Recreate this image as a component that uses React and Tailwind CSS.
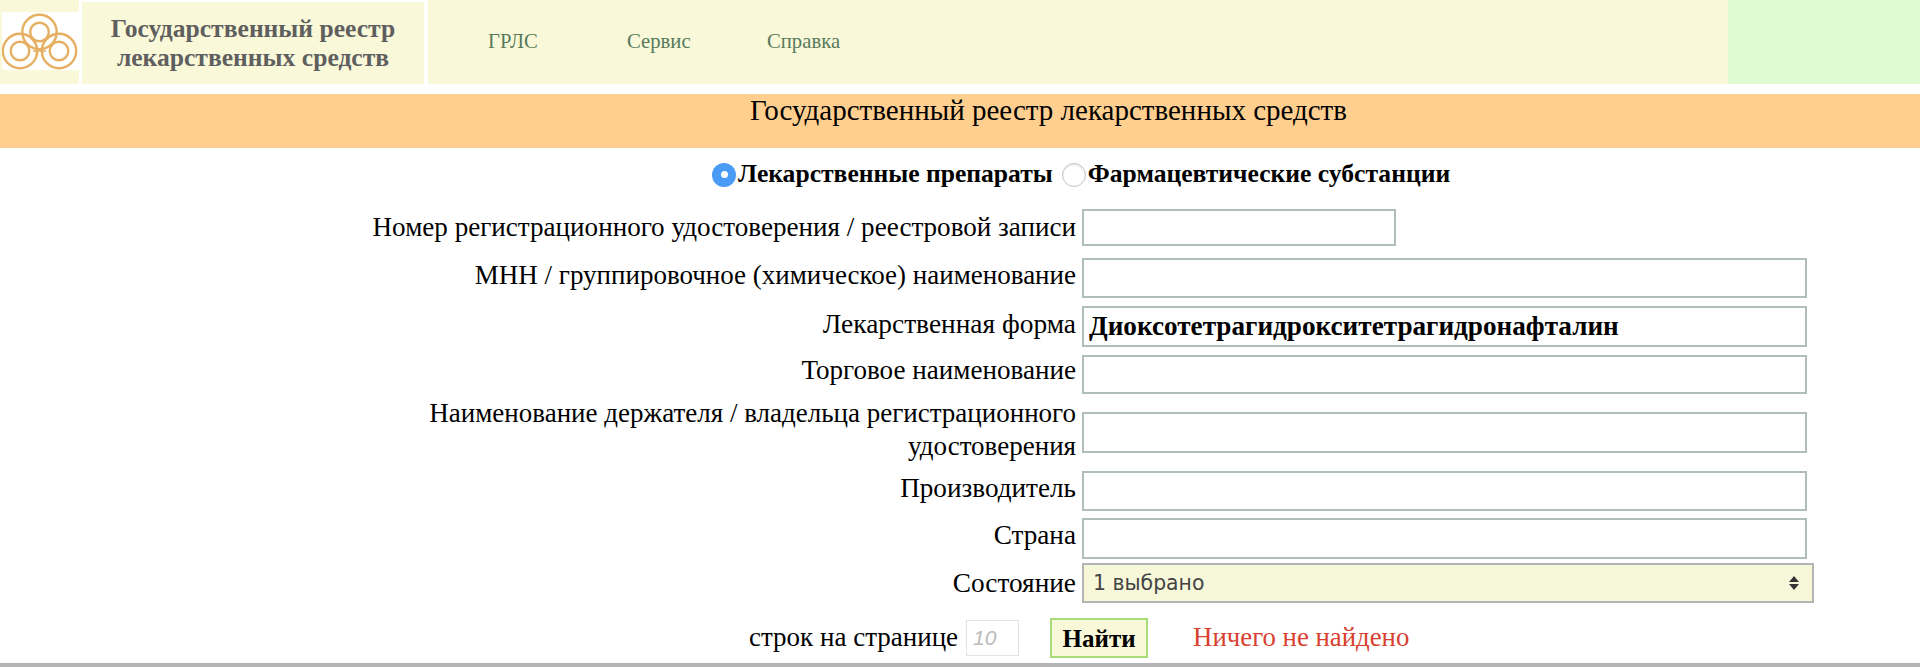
function Logo() {
  return (
    <svg width="77" height="58" viewBox="2 12 77 58" className="block bg-white">
      <g fill="none" stroke="#e5b062">
        <circle cx="39.5" cy="32" r="17.2" strokeWidth="2.4" />
        <circle cx="39.5" cy="32" r="9.3" strokeWidth="2.4" />
        <circle cx="20" cy="51" r="17.2" strokeWidth="2.4" />
        <circle cx="20" cy="51" r="9.3" strokeWidth="2.4" />
        <circle cx="59" cy="51" r="17.2" strokeWidth="2.4" />
        <circle cx="59" cy="51" r="9.3" strokeWidth="2.4" />
        <path d="M33 51h13M36.5 46.5v9M42.5 46.5v9" strokeWidth="1.6" />
      </g>
    </svg>
  );
}

function Row({ label, cls, labelCls, children }) {
  return (
    <div className={`flex items-center ${cls}`}>
      <label className={`shrink-0 text-right leading-[33px] text-black ${labelCls}`}>
        {label}
      </label>
      <div className="ml-[6px]">{children}</div>
    </div>
  );
}

const inputCls = "block border-2 border-[#b0bfb5] bg-white outline-none px-1";

export default function App() {
  return (
    <div className="relative h-[667px] w-[1920px] overflow-hidden bg-white font-['Liberation_Serif',serif]">
      <header className="flex h-[84px]">
        <div className="h-[84px] w-[79px] bg-[#f9f9d9] pl-[2px] pt-[12px]">
          <Logo />
        </div>
        <div className="ml-[3px] mt-[2px] flex h-[82px] w-[342px] items-center justify-center bg-[#f9f9d9] text-center text-[25.6px] font-bold leading-[29px] text-[#5f5f5f]">
          <span>Государственный реестр<br />лекарственных средств</span>
        </div>
        <nav className="ml-[4px] flex w-[1300px] items-start bg-[#f9f9d9] pl-[60px] pt-[29px] text-[20.7px] leading-[24px] text-[#587a5c]">
          <a className="w-[139px]">ГРЛС</a>
          <a className="w-[140px]">Сервис</a>
          <a>Справка</a>
        </nav>
        <div className="flex-1 bg-[#dffbd0]" />
      </header>

      <div className="mt-[10px] h-[54px] bg-[#ffcf90] pl-[177px] text-center text-[29px] leading-[32px] text-black">
        Государственный реестр лекарственных средств
      </div>

      <div className="mt-[14px] flex h-[25px] items-center pl-[712px] text-[25.6px] font-bold leading-[23px] text-black">
        <span className="flex h-[24px] w-[24px] items-center justify-center rounded-full bg-[#4a9bf5]">
          <span className="h-[7px] w-[7px] rounded-full bg-white" />
        </span>
        <span className="ml-[2px] pb-[2px]">Лекарственные препараты</span>
        <span className="ml-[9px] h-[24px] w-[24px] rounded-full border border-[#c4c4c4] bg-white shadow-[inset_0_1px_2px_rgba(0,0,0,0.12)]" />
        <span className="ml-[2px] pb-[2px]">Фармацевтические субстанции</span>
      </div>

      <Row cls="mt-[22px] h-[37px]" labelCls="ml-[360px] w-[716px] text-[27.1px]" label="Номер регистрационного удостоверения / реестровой записи">
        <input className={`${inputCls} h-[37px] w-[314px]`} />
      </Row>
      <Row cls="mt-[12px] h-[40px]" labelCls="ml-[410px] w-[666px] pb-[6px] text-[27px]" label="МНН / группировочное (химическое) наименование">
        <input className={`${inputCls} h-[40px] w-[725px]`} />
      </Row>
      <Row cls="mt-[8px] h-[41px]" labelCls="ml-[410px] w-[666px] pb-[4px] text-[27.4px]" label="Лекарственная форма">
        <input readOnly value="Диоксотетрагидрокситетрагидронафталин" className={`${inputCls} h-[41px] w-[725px] pl-[5px] text-[27.2px] font-bold text-black`} />
      </Row>
      <Row cls="mt-[8px] h-[39px]" labelCls="ml-[410px] w-[666px] pb-[8px] text-[27.1px]" label="Торговое наименование">
        <input className={`${inputCls} h-[39px] w-[725px]`} />
      </Row>
      <Row cls="mt-[18px] h-[41px]" labelCls="ml-[410px] w-[666px] pb-[6px] text-[27px]" label="Наименование держателя / владельца регистрационного удостоверения">
        <input className={`${inputCls} h-[41px] w-[725px]`} />
      </Row>
      <Row cls="mt-[18px] h-[40px]" labelCls="ml-[410px] w-[666px] pb-[6px] text-[27.2px]" label="Производитель">
        <input className={`${inputCls} h-[40px] w-[725px]`} />
      </Row>
      <Row cls="mt-[7px] h-[41px]" labelCls="ml-[410px] w-[666px] pb-[6px] text-[27.2px]" label="Страна">
        <input className={`${inputCls} h-[41px] w-[725px]`} />
      </Row>
      <Row cls="mt-[4px] h-[40px]" labelCls="ml-[410px] w-[666px] text-[27.3px]" label="Состояние">
        <div className="relative">
          <select className="block h-[40px] w-[732px] appearance-none border-2 border-[#b4b4b4] bg-[#f7f8da] pl-[9px] font-['DejaVu_Sans',sans-serif] text-[20.4px] text-[#444] outline-none">
            <option>1 выбрано</option>
          </select>
          <svg width="10" height="14" viewBox="0 0 10 14" className="absolute right-[15px] top-[13px]">
            <path d="M5 0L10 6H0zM5 14L0 8h10z" fill="#333" />
          </svg>
        </div>
      </Row>

      <div className="mt-[15px] flex h-[40px] items-center pl-[749px]">
        <span className="pb-[3px] text-[27px] leading-[30px] text-black">строк на странице</span>
        <input placeholder="10" className="ml-[8px] h-[36px] w-[53px] border border-[#e2e2e2] bg-white pl-[6px] font-['Liberation_Sans',sans-serif] text-[21px] italic outline-none placeholder:text-[#bbb]" />
        <button className="ml-[31px] h-[40px] w-[98px] border-2 border-[#a8dc78] bg-[#f9f9d9] pb-[2px] text-[25px] font-bold text-black">Найти</button>
        <span className="ml-[45px] pb-[3px] text-[26.8px] leading-[30px] text-[#d9402f]">Ничего не найдено</span>
      </div>

      <div className="absolute bottom-0 left-0 right-0 h-[4px] bg-[#b4b4b4]" />
    </div>
  );
}
